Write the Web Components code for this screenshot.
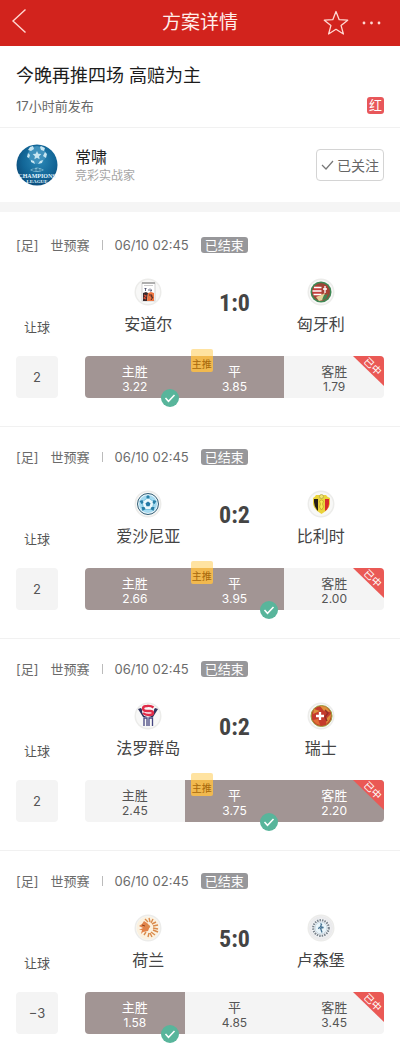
<!DOCTYPE html>
<html lang="zh-CN">
<head>
<meta charset="utf-8">
<meta name="viewport" content="width=device-width, initial-scale=1">
<title>方案详情</title>
<style>
  body {
    margin: 0;
    background: #fff;
    color: #4a4a4a;
    font-family: "Inter", "Noto Sans CJK SC", sans-serif;
    font-size: 13px;
    line-height: 16px;
  }
</style>
</head>
<body>
<plan-page></plan-page>

<script>
const CRESTS = {
  andorra: `<rect x="8" y="5" width="13" height="18" fill="#fff" stroke="#c9c9c9" stroke-width=".8"/>
    <path d="M8 5h13" stroke="#777" stroke-width="1"/><path d="M10 7.500h9" stroke="#aaa" stroke-width=".6"/>
    <path d="M10.500 10.500h2M11.500 10.500v2.500M14 12h1M16 10.500v2.500h1.500v-1.500" stroke="#3d4160" stroke-width=".8" fill="none"/>
    <path d="M9 15l3-1 2 1-1 8H9z" fill="#3a2a2c"/><path d="M14 15l3-1 3 1v8h-7z" fill="#ee7440"/>
    <path d="M10 17l2 1-2 2 2 1" stroke="#e04d34" stroke-width="1.200" fill="none"/><path d="M15 17h3l-1 2h2l-2 3" stroke="#4b2a26" fill="none"/>`,
  hungary: `<circle cx="14" cy="14" r="10.500" fill="#3e8753"/><circle cx="14" cy="14" r="9" fill="#994737"/>
    <path d="M6.500 9c5-3 7 0 8 1v7c-4 4-7 1-9-2z" fill="#c63f3d"/>
    <path d="M7 9.500h7.500M5.500 13h9M6.500 16.500h8" stroke="#fff" stroke-width="1.500"/>
    <path d="M15 7h5l2 5-2 5-5 1z" fill="#a94236"/><path d="M18 8v7M16 11h4" stroke="#fff" stroke-width="1.300"/>
    <path d="M9 19l5-2 4-2-2 7-4 1z" fill="#e4d299"/><path d="M17 17l4-1-2 5-4 1z" fill="#438451"/>`,
  estonia: `<circle cx="14" cy="14" r="10.500" fill="#e8f6fc" stroke="#315d74" stroke-width="1"/>
    <circle cx="14" cy="14" r="9" fill="#a5daf0"/>
    <path d="M14 7.500l6 4.500-2 7.500h-8L8 12z" fill="#eaf8fc" stroke="#5cb4d6" stroke-width=".7"/>
    <path d="M14 5l2 2-2 2-2-2zM22.500 11l-3-1-1 3 2 1zM19.500 21l-3-2 1-2h3zM8.500 21l3-2-1-2h-3zM5.500 11l3-1 1 3-2 1z" fill="#287fa6"/>
    <path d="M14 11.500l2.500 1.800-1 2.900h-3l-1-2.900z" fill="#2479a5"/>`,
  belgium: `<path d="M6 8q2-1 3-3h10q1 2 4 3v6q-1 6-8.500 10Q7 20 6 14z" fill="#ead33b"/>
    <path d="M7 9h4v12q-4-4-4-9z" fill="#251d19"/><path d="M18 9h4v5q0 5-4 7z" fill="#d92b2b"/>
    <circle cx="14.500" cy="6.500" r="2" fill="#f4e66c" stroke="#a9a04d" stroke-width=".7"/>
    <path d="M12.500 11q2-2 4 0l-1 3 1 3-2 3-2-3 1-3z" fill="#f7ea53" stroke="#b49b20" stroke-width=".6"/>`,
  faroe: `<path d="M4 7l3-1 3 5h8l3-5 3 1-5 8H9z" fill="#30335d"/>
    <circle cx="14" cy="9" r="6" fill="#fbf6f8"/>
    <path d="M19.500 5.500Q17 3.500 13 4q-4 0-4 2.500T13 9h3q3 0 3 2t-4 2q-4 0-6-2" stroke="#e02c48" stroke-width="2.400" fill="none"/>
    <path d="M10 24v-8h3v8M15 24v-8h3.500v8M13 16v6" stroke="#464681" stroke-width="1.300" fill="none"/>`,
  switzerland: `<circle cx="14.500" cy="14" r="10.500" fill="#c53b2c" stroke="#98a23b"/>
    <path d="M13 4q7-1 10 6l-6-1zM24 12q0 6-5 10l1-6zM7 7l6 2-7 3z" fill="#dd903b"/>
    <path d="M6 18l5-1 2 6q-5-1-7-5z" fill="#e06d35"/>
    <path d="M13 10v8M9 14h8" stroke="#fff" stroke-width="2.300"/>
    <path d="M18 8l3 3-3 4 2 4" stroke="#932e28" stroke-width="1.500" fill="none"/>`,
  netherlands: `<circle cx="14" cy="14" r="11.500" fill="#fbf1df"/>
    <path d="M5 12l3-2 2-3 3 2 3 3-2 5-5 1-2 2 1-4H5l4-2z" fill="#e28349"/>
    <path d="M11 5l3 3M15 4l1 4M19 5l-2 4M22 8l-4 2M24 11l-5 1M24 15l-5-1M24 18l-5-2M21 21l-4-3M18 23l-2-4M14 23l1-4M10 21l2-3M12 11l4 2" stroke="#da8b4c" stroke-width="1.400"/>
    <path d="M8 11l3 1" stroke="#8f4422"/>`,
  luxembourg: `<circle cx="14" cy="14" r="12" fill="#ebebed"/><circle cx="14" cy="14" r="9.500" fill="#f4f6f8"/>
    <circle cx="14" cy="14" r="7.800" fill="none" stroke="#7b858e" stroke-width="2.200" stroke-dasharray="1.500 1"/>
    <circle cx="14" cy="14" r="6" fill="#eaf5fa" stroke="#b9ccda" stroke-width=".7"/>
    <path d="M13.500 9.500l1 1-1 2 3 1-3 .5 1.500 4.500M12.500 13l-1 2" stroke="#477494" stroke-width="1.300" fill="none"/>`
};

function define(name, markup, setup) {
  const template = document.createElement("template");
  template.innerHTML = markup;
  customElements.define(name, class extends HTMLElement {
    connectedCallback() {
      if (this.shadowRoot) return;
      const root = this.attachShadow({ mode: "open" });
      root.append(template.content.cloneNode(true));
      if (setup) setup(this, root);
    }
  });
}

define("nav-bar", `
  <style>
    :host { display: block; background: #d2231d; color: #fff; }
    header { display: grid; grid-template-columns: 72px 1fr 72px; align-items: center; height: 46px; padding: 0 8px; }
    h1 { margin: 0; font-size: 19px; line-height: 26px; font-weight: 400; text-align: center; color: #ffeeea; }
    button { display: block; border: 0; padding: 0; background: none; color: #ffd8d2; }
    svg { display: block; fill: none; stroke: currentColor; }
    .actions { display: flex; justify-content: flex-end; gap: 11px; padding-right: 10px; }
  </style>
  <header>
    <button aria-label="返回"><svg width="24" height="32" viewBox="0 0 24 32" stroke-width="1.400"><path d="M17.500 2.500L5 14l12.500 11.500"/></svg></button>
    <h1><slot></slot></h1>
    <div class="actions">
      <button aria-label="收藏"><svg width="26" height="26" viewBox="0 0 26 26" stroke-width="1.300" stroke-linejoin="round"><path d="M13 1.500l3.200 8.200 8.500.5-6.600 5.400 2.300 8.400L13 19.300 5.600 24l2.300-8.400-6.600-5.400 8.500-.5z"/></svg></button>
      <button aria-label="更多"><svg width="22" height="26" viewBox="0 0 22 26"><g fill="currentColor" stroke="none"><circle cx="4" cy="13" r="1.400"/><circle cx="11.500" cy="13" r="1.400"/><circle cx="19" cy="13" r="1.400"/></g></svg></button>
    </div>
  </header>`);

define("plan-heading", `
  <style>
    :host { display: block; padding: 18px 16px 13px; border-bottom: 1px solid #f1f1f1; }
    h2 { margin: 0; font-size: 18px; line-height: 24px; font-weight: 400; color: #1c1c1c; }
    div { display: flex; justify-content: space-between; align-items: center; margin-top: 9px; color: #686868; }
    .result { width: 17px; border-radius: 3px; background: #e8575a; color: #fff; line-height: 17px; text-align: center; }
  </style>
  <h2><slot></slot></h2>
  <div><slot name="time"></slot><span class="result">红</span></div>`);

define("author-card", `
  <style>
    :host { display: flex; align-items: center; padding: 16px; border-bottom: 10px solid #f5f5f5; }
    .avatar { display: block; width: 42px; height: 42px; }
    .info { flex: 1; margin-left: 17px; }
    .name { font-size: 16px; line-height: 22px; color: #222; }
    .role { font-size: 12px; line-height: 16px; color: #a5a5a5; }
    button { display: flex; align-items: center; justify-content: center; gap: 3px; height: 32px; width: 68px; padding: 0;
      border: 1px solid #d4d4d4; border-radius: 4px; background: #fff; color: #666; font-family: inherit; font-size: 14px; }
  </style>
  <svg class="avatar" viewBox="0 0 42 42" role="img" aria-label="头像">
    <defs>
      <clipPath id="round"><circle cx="21" cy="21" r="20.500"/></clipPath>
      <radialGradient id="blue" cx=".55" cy=".4" r=".65"><stop offset="0" stop-color="#2b88b7"/><stop offset=".6" stop-color="#126697"/><stop offset="1" stop-color="#0b4775"/></radialGradient>
    </defs>
    <g clip-path="url(#round)">
      <rect width="42" height="42" fill="url(#blue)"/>
      <circle cx="21" cy="11" r="9" fill="#3f91bc"/>
      <g fill="#c8e6f1"><path d="M21 7l1.300 2.700 3 .4-2.200 2.100.5 3L21 13.800l-2.600 1.400.5-3-2.200-2.100 3-.4z"/>
      <path d="M14 3l3-1 1 3-3 2-3-1zM25 2l4 2-1 3-3-1-1-3zM12 9l2 2-1 3-2-1zM29 8l2 2-1 4-3-2zM15 16l3 1 1 3-4-2zM24 17l3-1-1 3-4 1z"/></g>
      <path d="M14 26q7-5 14 0-7 4-14 0" fill="#80bbd3"/><path d="M16 26h10M18 24v3M22 24v3" stroke="#17628f"/>
    </g>
    <g fill="#e3f6ff" font-family="Liberation Serif, serif" font-weight="700" text-anchor="middle"><text x="21" y="34" font-size="6">CHAMPIONS</text><text x="21" y="39" font-size="5">LEAGUE</text></g>
  </svg>
  <div class="info"><div class="name"><slot></slot></div><div class="role"><slot name="role"></slot></div></div>
  <button><svg width="13" height="12" viewBox="0 0 13 12" fill="none" stroke="#777" stroke-width="1.200"><path d="M1 6l4 4 7-8"/></svg>已关注</button>`);

define("team-crest", `
  <style>
    :host { display: flex; flex-direction: column; align-items: center; gap: 7px; }
    svg { display: block; width: 28px; height: 28px; }
    .name { font-size: 16px; line-height: 22px; color: #444; white-space: nowrap; }
  </style>
  <svg viewBox="0 0 28 28" aria-hidden="true"></svg>
  <div class="name"><slot></slot></div>`,
  (host, root) => {
    root.querySelector("svg").innerHTML =
      `<circle cx="14" cy="14" r="13.500" fill="#ececea"/><circle cx="14" cy="14" r="12" fill="#f8f8f7"/>` +
      CRESTS[host.getAttribute("crest")];
  });

define("odds-cell", `
  <style>
    :host { display: block; position: relative; box-sizing: border-box; height: 42px; padding: 8px 0 4px; background: #f4f4f4; color: #555; text-align: center; line-height: 15px; }
    :host([picked]) { background: #a29594; color: #fff; }
    .value { font-size: 12px; }
    .tip, .check, .won { display: none; position: absolute; }
    :host([tip]) .tip { display: block; left: 6px; top: -7px; width: 22px; padding-top: 7px; border-radius: 2px; background: linear-gradient(#ffe3a1 7px, #f1b94f 7px); color: #a7680c; font-size: 10px; line-height: 16px; }
    :host([hit]) .check { display: block; right: 6px; bottom: -9px; width: 18px; height: 18px; z-index: 1; }
    :host([won]) .won { display: block; right: 0; top: 0; width: 31px; height: 30px; border-top-right-radius: 4px; background: #ea5955; clip-path: polygon(0 0, 100% 0, 100% 100%); color: #fff; }
    .won span { position: absolute; right: 0; top: 4px; width: 22px; font-size: 10px; line-height: 12px; transform: rotate(44deg); }
  </style>
  <div><slot></slot></div>
  <div class="value"><slot name="value"></slot></div>
  <span class="tip">主推</span>
  <svg class="check" viewBox="0 0 18 18"><circle cx="9" cy="9" r="9" fill="#58b59b"/><path d="M4.500 9l3 3.300 6-6.300" fill="none" stroke="#fff" stroke-width="1.500"/></svg>
  <div class="won"><span>已中</span></div>`,
  (host, root) => {
    // Markers that do not apply to this outcome are dropped from the tree.
    if (!host.hasAttribute("tip")) root.querySelector(".tip").remove();
    if (!host.hasAttribute("hit")) root.querySelector(".check").remove();
    if (!host.hasAttribute("won")) root.querySelector(".won").remove();
  });

define("match-card", `
  <style>
    :host { display: block; padding: 22px 16px 28px; border-bottom: 1px solid #f1f1f1; }
    :host(:last-of-type) { padding-bottom: 13px; border-bottom: 0; }
    .meta { display: flex; align-items: center; color: #6b6b6b; white-space: nowrap; }
    .league { margin-left: 12px; }
    .rule { width: 1px; height: 10px; margin: 0 12px; background: #bbb; }
    .status { margin-left: 12px; padding: 0 4px; border-radius: 3px; background: #97979a; color: #fff; }
    .body { display: grid; grid-template-columns: 42px 1fr; column-gap: 27px; row-gap: 21px; margin-top: 25px; }
    .label { align-self: end; text-align: center; color: #555; }
    .teams { display: grid; grid-template-columns: 1fr 46px 1fr; }
    .score { align-self: center; padding-bottom: 8px; text-align: center; font: 700 24px/30px "Roboto Condensed", "Liberation Sans Narrow", "Open Sans Condensed", "Roboto", sans-serif; color: #444; white-space: nowrap; }
    .handicap { border-radius: 4px; background: #f4f4f4; color: #555; line-height: 42px; text-align: center; }
    .odds { display: grid; grid-template-columns: repeat(3, 1fr); }
    ::slotted(odds-cell:nth-of-type(1)) { border-radius: 4px 0 0 4px; }
    ::slotted(odds-cell:nth-of-type(3)) { border-radius: 0 4px 4px 0; }
  </style>
  <div class="meta"><span>[足]</span><span class="league">世预赛</span><span class="rule"></span><time>06/10 02:45</time><span class="status">已结束</span></div>
  <div class="body">
    <div class="label">让球</div>
    <div class="teams"><slot name="home"></slot><div class="score"><slot name="score"></slot></div><slot name="away"></slot></div>
    <div class="handicap"><slot name="handicap"></slot></div>
    <div class="odds"><slot></slot></div>
  </div>`);

define("plan-page", `
  <style>
    :host { display: block; }
    main { display: block; padding-top: 3px; }
  </style>
  <nav-bar>方案详情</nav-bar>
  <plan-heading>今晚再推四场 高赔为主<span slot="time">17小时前发布</span></plan-heading>
  <author-card>常啸<span slot="role">竞彩实战家</span></author-card>
  <main>
    <match-card>
      <team-crest slot="home" crest="andorra">安道尔</team-crest><span slot="score">1:0</span><team-crest slot="away" crest="hungary">匈牙利</team-crest>
      <span slot="handicap">2</span>
      <odds-cell picked hit>主胜<span slot="value">3.22</span></odds-cell><odds-cell picked tip>平<span slot="value">3.85</span></odds-cell><odds-cell won>客胜<span slot="value">1.79</span></odds-cell>
    </match-card>
    <match-card>
      <team-crest slot="home" crest="estonia">爱沙尼亚</team-crest><span slot="score">0:2</span><team-crest slot="away" crest="belgium">比利时</team-crest>
      <span slot="handicap">2</span>
      <odds-cell picked>主胜<span slot="value">2.66</span></odds-cell><odds-cell picked tip hit>平<span slot="value">3.95</span></odds-cell><odds-cell won>客胜<span slot="value">2.00</span></odds-cell>
    </match-card>
    <match-card>
      <team-crest slot="home" crest="faroe">法罗群岛</team-crest><span slot="score">0:2</span><team-crest slot="away" crest="switzerland">瑞士</team-crest>
      <span slot="handicap">2</span>
      <odds-cell>主胜<span slot="value">2.45</span></odds-cell><odds-cell picked tip hit>平<span slot="value">3.75</span></odds-cell><odds-cell picked won>客胜<span slot="value">2.20</span></odds-cell>
    </match-card>
    <match-card>
      <team-crest slot="home" crest="netherlands">荷兰</team-crest><span slot="score">5:0</span><team-crest slot="away" crest="luxembourg">卢森堡</team-crest>
      <span slot="handicap">−3</span>
      <odds-cell picked hit>主胜<span slot="value">1.58</span></odds-cell><odds-cell>平<span slot="value">4.85</span></odds-cell><odds-cell won>客胜<span slot="value">3.45</span></odds-cell>
    </match-card>
  </main>`);
</script>
</body>
</html>
